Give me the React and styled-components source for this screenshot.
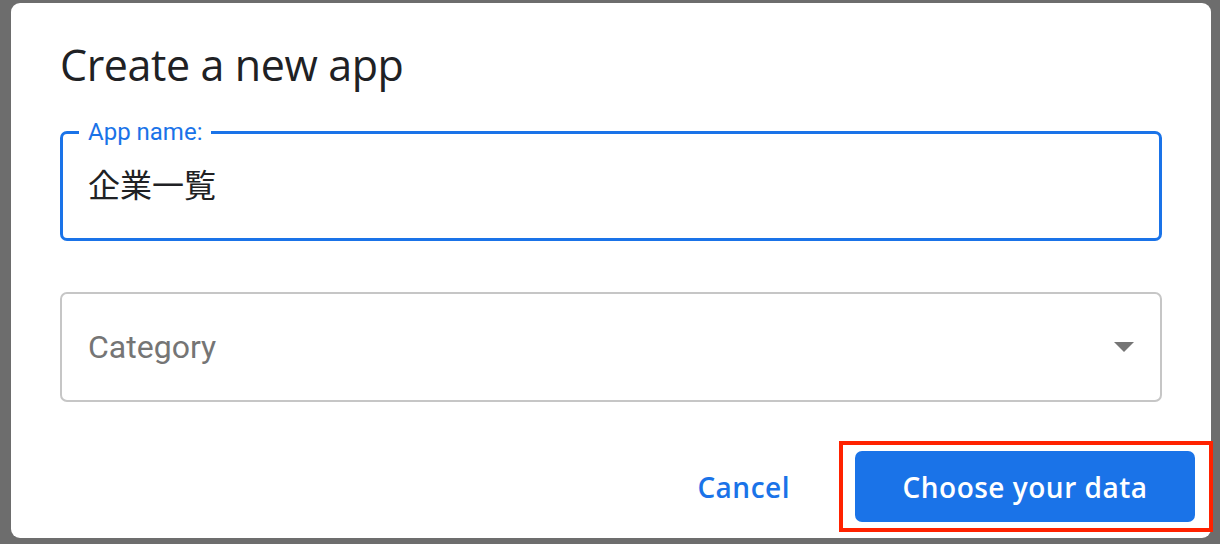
import React from "react";
import styled, { createGlobalStyle } from "styled-components";

const GlobalStyle = createGlobalStyle`
  html, body {
    margin: 0;
    padding: 0;
    background: #6d6d6d;
  }
  * {
    box-sizing: border-box;
  }
`;

const Backdrop = styled.div`
  width: 1220px;
  height: 544px;
  padding: 3px 9px 6px 11px;
  background: #6d6d6d;
  overflow: hidden;
`;

const Dialog = styled.div`
  width: 1200px;
  height: 535px;
  background: #fff;
  border-radius: 9px;
  padding: 34px 16px 0 49px;
  display: flex;
  flex-direction: column;
`;

const Title = styled.h1`
  margin: 0;
  font-family: "Open Sans", "Liberation Sans", sans-serif;
  font-weight: 400;
  font-size: 43px;
  line-height: 56px;
  letter-spacing: -0.4px;
  color: #202124;
`;

const Form = styled.div`
  display: flex;
  flex-direction: column;
  gap: 51px;
  margin-top: 38px;
  margin-right: 33px;
`;

const Field = styled.div`
  position: relative;
  height: 110px;
  border: ${(p) => (p.focused ? "3px solid #1a73e8" : "2px solid #c6c6c6")};
  border-radius: 7px;
  display: flex;
  align-items: center;
  padding: 0 ${(p) => (p.focused ? "25px" : "26px")};
`;

const FloatLabel = styled.span`
  position: absolute;
  top: -16px;
  left: 16px;
  padding: 0 9px;
  background: #fff;
  font-family: Roboto, "Liberation Sans", sans-serif;
  font-size: 24px;
  line-height: 28px;
  color: #1a73e8;
`;

const Value = styled.span`
  font-family: Roboto, "Noto Sans CJK JP", sans-serif;
  font-size: 32px;
  color: #202124;
  margin-top: -6px;
`;

const Placeholder = styled.span`
  flex: 1;
  font-family: Roboto, "Liberation Sans", sans-serif;
  font-size: 32px;
  color: #757575;
`;

const Caret = styled.span`
  width: 0;
  height: 0;
  border-left: 10px solid transparent;
  border-right: 10px solid transparent;
  border-top: 10px solid #757575;
`;

const Actions = styled.div`
  display: flex;
  justify-content: flex-end;
  align-items: center;
  gap: 49px;
  margin-top: 49px;
`;

const TextButton = styled.button`
  border: none;
  background: none;
  padding: 0 16px;
  height: 71px;
  font-family: "Open Sans", "Liberation Sans", sans-serif;
  font-weight: 600;
  font-size: 28px;
  letter-spacing: 0.5px;
  color: #1a73e8;
  cursor: pointer;
`;

const PrimaryWrap = styled.div`
  position: relative;
`;

const PrimaryButton = styled.button`
  width: 340px;
  height: 71px;
  border: none;
  border-radius: 7px;
  background: #1a73e8;
  color: #fff;
  font-family: "Open Sans", "Liberation Sans", sans-serif;
  font-weight: 600;
  font-size: 28px;
  letter-spacing: 0.5px;
  cursor: pointer;
`;

// 스크린샷에 그려진 빨간 강조 박스
const Highlight = styled.span`
  position: absolute;
  top: -10px;
  bottom: -10px;
  left: -16px;
  right: -18px;
  border: 4px solid #ff2200;
  pointer-events: none;
`;

export default function App() {
  return (
    <Backdrop>
      <GlobalStyle />
      <Dialog>
        <Title>Create a new app</Title>
        <Form>
          <Field focused>
            <FloatLabel>App name:</FloatLabel>
            <Value>企業一覧</Value>
          </Field>
          <Field>
            <Placeholder>Category</Placeholder>
            <Caret />
          </Field>
        </Form>
        <Actions>
          <TextButton>Cancel</TextButton>
          <PrimaryWrap>
            <PrimaryButton>Choose your data</PrimaryButton>
            <Highlight />
          </PrimaryWrap>
        </Actions>
      </Dialog>
    </Backdrop>
  );
}
